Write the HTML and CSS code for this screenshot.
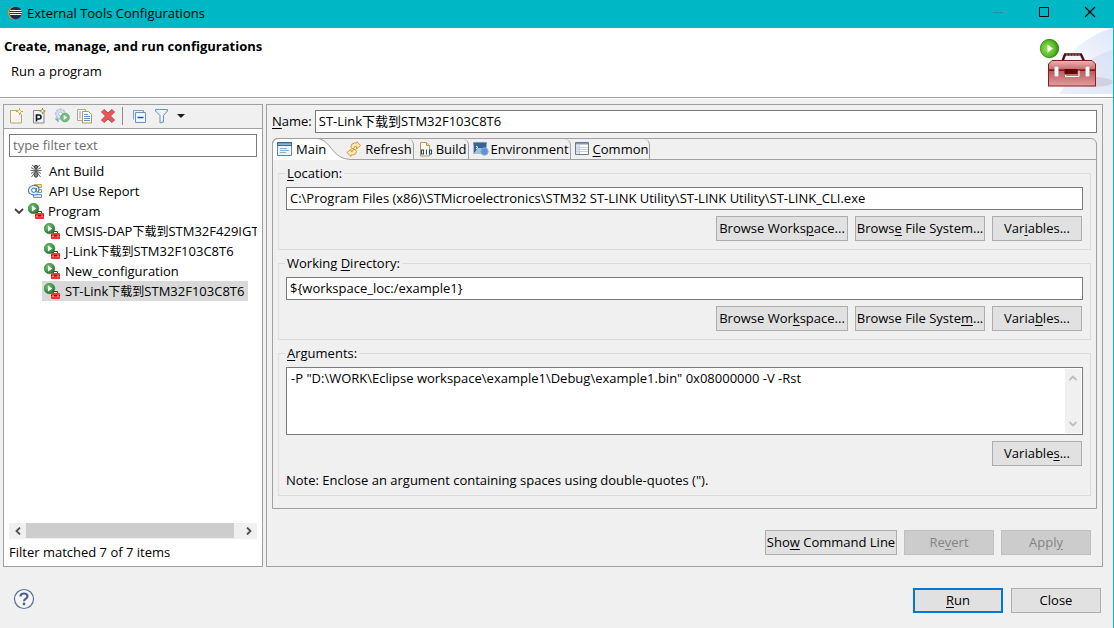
FILE: index.html
```html
<!DOCTYPE html>
<html lang="en">
<head>
<meta charset="utf-8">
<title>External Tools Configurations</title>
<link rel="stylesheet" href="styles.css">
</head>
<body>
<svg class="defs" width="0" height="0" aria-hidden="true">
  <defs>
    <radialGradient id="ball" cx="0.4" cy="0.35" r="0.7"><stop offset="0" stop-color="#7cc878"/><stop offset="0.6" stop-color="#3c9a45"/><stop offset="1" stop-color="#1c6b30"/></radialGradient>
    <linearGradient id="gold" x1="0" y1="0" x2="1" y2="1"><stop offset="0" stop-color="#fffbe6"/><stop offset="1" stop-color="#eef0fa"/></linearGradient>
    <linearGradient id="blue" x1="0" y1="0" x2="0" y2="1"><stop offset="0" stop-color="#4f86bf"/><stop offset="1" stop-color="#9cd3ea"/></linearGradient>
    <linearGradient id="lid" x1="0" y1="0" x2="0" y2="1"><stop offset="0" stop-color="#efb4b4"/><stop offset="1" stop-color="#c4686a"/></linearGradient>
    <linearGradient id="box" x1="0" y1="0" x2="0" y2="1"><stop offset="0" stop-color="#bd5558"/><stop offset="0.5" stop-color="#cf787a"/><stop offset="1" stop-color="#e0a0a0"/></linearGradient>
    <radialGradient id="bigball" cx="0.4" cy="0.5" r="0.6"><stop offset="0" stop-color="#9be04a"/><stop offset="0.65" stop-color="#5cbf2a"/><stop offset="1" stop-color="#2d8a14"/></radialGradient>
    <linearGradient id="fade" x1="0" y1="1" x2="1" y2="0"><stop offset="0.15" stop-color="#ffffff"/><stop offset="1" stop-color="#dfe7f8"/></linearGradient>
    <symbol id="run-tool" viewBox="0 0 16 16">
      <circle cx="5.500" cy="5.500" r="5.300" fill="url(#ball)" stroke="#2b7a3c" stroke-width="0.600"/>
      <path d="M4 2.500v6l4.200-3z" fill="#fff"/>
      <path d="M9.500 10v-1.500h4v1.500" fill="none" stroke="#b81414"/>
      <rect x="7" y="10" width="9" height="6" rx="0.800" fill="#e83a34"/>
      <path d="M7 12.500h9" stroke="#8c1010"/><path d="M9 12v2M14 12v2" stroke="#ffb0a0"/>
    </symbol>
  </defs>
</svg>
<div class="window">
  <div class="titlebar">
    <svg class="icon14" viewBox="0 0 14 14"><circle cx="6.300" cy="7" r="6.300" fill="#f7941e"/><circle cx="7.600" cy="7" r="6.200" fill="#2c2255"/><path d="M2 4.500h11.500M1.500 6.500h12.500M2 8.500h11.500" stroke="#fff"/></svg>
    <span class="caption">External Tools Configurations</span>
    <button class="wbtn" aria-label="Minimize"><svg viewBox="0 0 12 12"><path d="M1 6.500h10" stroke="#16929b"/></svg></button>
    <button class="wbtn" aria-label="Maximize"><svg viewBox="0 0 12 12"><path d="M1.500 1.500h9v9h-9z" fill="none" stroke="#000"/></svg></button>
    <button class="wbtn" aria-label="Close window"><svg viewBox="0 0 12 12"><path d="M1 1l10 10M11 1L1 11" stroke="#000" stroke-width="1.200"/></svg></button>
  </div>

  <header class="header">
    <div>
      <h1>Create, manage, and run configurations</h1>
      <p>Run a program</p>
    </div>
    <svg class="banner" viewBox="0 0 78 66" aria-hidden="true">
      <path d="M78 0C48 8 22 34 5 66H78z" fill="url(#fade)"/>
      <path d="M78 22C58 26 38 44 24 66H78z" fill="#c4d2ee" opacity="0.350"/>
      <ellipse cx="58" cy="54" rx="20" ry="5" fill="#b9a5b8" opacity="0.350"/>
      <path d="M27.500 33l2.500-6.500h16l3 6.500" fill="none" stroke="#4a1015" stroke-width="2.400"/>
      <path d="M31 27h14" stroke="#b98080" stroke-width="1" stroke-dasharray="2 1"/>
      <path d="M13.500 42V36l3.500-3.500h40l3.500 3.500v6z" fill="url(#lid)" stroke="#7c1c22"/>
      <rect x="13.500" y="42" width="47" height="16" fill="url(#box)" stroke="#8a1c22"/>
      <path d="M14 42.500h46" stroke="#7b1920"/>
      <path d="M30.500 47v1.500h13.500v-6" fill="none" stroke="#fff"/><rect x="29.500" y="41" width="13" height="5" fill="#6b0408"/>
      <rect x="19.500" y="38.500" width="4" height="10" rx="1" fill="#f4f4f0" stroke="#b9aaaa" stroke-width="0.600"/>
      <rect x="50.500" y="38.500" width="4" height="10" rx="1" fill="#f4f4f0" stroke="#b9aaaa" stroke-width="0.600"/>
      <circle cx="14.500" cy="20.500" r="9.200" fill="url(#bigball)" stroke="#2c7c18" stroke-width="0.800"/>
      <path d="M12.500 16.500v8l5.500-4z" fill="#fff"/>
    </svg>
  </header>

  <main class="main">
    <section class="pane left">
      <div class="toolbar">
        <button aria-label="New launch configuration"><svg viewBox="0 0 16 16"><path d="M2.500 2.500h7l4 4v8.500h-11z" fill="url(#gold)" stroke="#bfa868"/><path d="M11.500 0v7M8 3.500h7" stroke="#c9a03c"/><path d="M11.500 1.500l2 2-2 2-2-2z" fill="#fff3b0" stroke="#c9a03c" stroke-width="0.600"/></svg></button>
        <button aria-label="New prototype"><svg viewBox="0 0 16 16"><path d="M2.500 2.500h10.500v12.500h-10.500z" fill="#eef3fb" stroke="#8c8a80"/><path d="M5.500 13.500v-6.500h2.500q2 0 2 2t-2 2h-2.500" fill="none" stroke="#10161f" stroke-width="1.600"/><path d="M11.500 0v6M8.500 3h6" stroke="#a0792a"/><path d="M11.500 1l2 2-2 2-2-2z" fill="#fff3b0" stroke="#a0792a" stroke-width="0.700"/></svg></button>
        <button aria-label="Export"><svg viewBox="0 0 16 16"><circle cx="6.500" cy="6" r="4.800" fill="#dde4ef" stroke="#b3bed2" stroke-width="1.500" stroke-dasharray="2.500 1"/><circle cx="6.500" cy="6" r="2" fill="#f8f9fc" stroke="#b7c2d6"/><circle cx="11" cy="9.500" r="4.300" fill="#73bd83" stroke="#5fae72"/><path d="M9.700 7v5l3.500-2.500z" fill="#fff"/><path d="M0.500 10.500h4v4z" fill="#7f9cc8"/></svg></button>
        <button aria-label="Duplicate"><svg viewBox="0 0 16 16"><path d="M0.500 1.500h8v11h-8z" fill="#f3f5fb" stroke="#b8a878"/><path d="M2 4h2M2 6h2M2 8h2M2 10h2" stroke="#8aabd4"/><path d="M5.500 3.500h6l3 3v8.500h-9z" fill="#fdfbf0" stroke="#b19a60"/><path d="M7 6.500h4M7 8.500h6M7 10.500h6M7 12.500h6" stroke="#6a92c6"/></svg></button>
        <button aria-label="Delete"><svg viewBox="0 0 16 16"><path d="M1.500 4l2.500-2.500L8 5l4-3.500L14.500 4l-4 4 4 4-2.500 2.500L8 11l-4 3.500L1.500 12l4-4z" fill="#e4575a" stroke="#c8434a"/></svg></button>
        <span class="sep"></span>
        <button aria-label="Collapse all"><svg viewBox="0 0 16 16"><path d="M2.500 11.500v-9h10v2" fill="#e7eff9" stroke="#7da0c4"/><path d="M4.500 4.500h10v10h-10z" fill="#eef6fd" stroke="#6d93bd"/><path d="M6.500 9.500h6" stroke="#1e508c" stroke-width="1.400"/></svg></button>
        <button aria-label="Filter"><svg viewBox="0 0 16 16"><path d="M1.500 1.500h12v1.500l-4 4.500v6.500l-3.500 1v-7.500l-4.500-4.500z" fill="#dcebf7" stroke="#6f93b7"/><path d="M4 3h6L7.500 6v7" fill="none" stroke="#fff" stroke-width="1.200"/></svg></button>
        <button class="drop" aria-label="Filter menu"><svg viewBox="0 0 8 4"><path d="M0 0h8L4 4z" fill="#1c1c1c"/></svg></button>
      </div>
      <div class="leftbody">
        <input class="field" type="text" placeholder="type filter text" aria-label="Filter">
        <ul class="tree">
          <li><span class="row"><svg class="ic" viewBox="0 0 16 16"><path d="M4 2l2.500 2M12 2L9.500 4M2.500 7.500h11M3.500 14l3-4M12.500 14l-3-4M3 4.500l3.500 2M13 4.500l-3.500 2M3 10.500l3.500-2M13 10.500l-3.500-2" stroke="#6a6a6a" fill="none"/><circle cx="8" cy="4" r="1.700" fill="#777" stroke="#444"/><ellipse cx="8" cy="7.500" rx="1.500" ry="1.500" fill="#555"/><ellipse cx="8" cy="11.500" rx="1.800" ry="2.800" fill="#8a8a8a" stroke="#444"/></svg><span>Ant Build</span></span></li>
          <li><span class="row"><svg class="ic" viewBox="0 0 16 16"><path d="M6.500 1.500h7v3h-7z" fill="#f4df8c" stroke="#c2a850"/><path d="M9.500 6.500h4v3h-4z" fill="#f6f2c8" stroke="#85a673"/><path d="M5.500 11.500h8v3h-8z" fill="#dbe8f7" stroke="#6b93c4"/><path d="M10 11Q7.500 12.500 4.500 11.700 0 10.500 0.500 7T5 2.500Q10.800 2 11 6q0 3.200-2.200 3-1-.1-.7-1.500l.6-2.500" fill="#eef5fc" stroke="#4a7fb8" stroke-width="1.200"/><circle cx="5.800" cy="7.200" r="2.200" fill="#fff" stroke="#356da8"/></svg><span>API Use Report</span></span></li>
          <li>
            <span class="row open"><svg class="chev" viewBox="0 0 10 6"><path d="M1 1l4 4 4-4" fill="none" stroke="#404040" stroke-width="1.800"/></svg><svg class="ic"><use href="#run-tool"/></svg><span>Program</span></span>
            <ul>
              <li><span class="row"><svg class="ic"><use href="#run-tool"/></svg><span>CMSIS-DAP<span lang="zh">下载到</span>STM32F429IGT6</span></span></li>
              <li><span class="row"><svg class="ic"><use href="#run-tool"/></svg><span>J-Link<span lang="zh">下载到</span>STM32F103C8T6</span></span></li>
              <li><span class="row"><svg class="ic"><use href="#run-tool"/></svg><span>New_configuration</span></span></li>
              <li><span class="row selected"><svg class="ic"><use href="#run-tool"/></svg><span>ST-Link<span lang="zh">下载到</span>STM32F103C8T6</span></span></li>
            </ul>
          </li>
        </ul>
        <div class="hscroll">
          <button aria-label="Scroll left"><svg viewBox="0 0 8 8"><path d="M6 0.500L2.500 4 6 7.500" fill="none" stroke="#505050" stroke-width="1.800"/></svg></button>
          <span class="track"><span class="thumb"></span></span>
          <button aria-label="Scroll right"><svg viewBox="0 0 8 8"><path d="M2 0.500L5.500 4 2 7.500" fill="none" stroke="#505050" stroke-width="1.800"/></svg></button>
        </div>
        <p class="status">Filter matched 7 of 7 items</p>
      </div>
    </section>

    <section class="pane right">
      <div class="namerow"><label for="name"><u>N</u>ame:</label><input id="name" class="field" type="text" value="ST-Link下载到STM32F103C8T6"></div>
      <div class="folder">
        <div class="tabs" role="tablist">
          <button class="tab active" role="tab" aria-selected="true">
            <svg class="curve" viewBox="0 0 80 22" aria-hidden="true"><path d="M0 22V6L6 0.500H44C60 0.500 58 21.500 80 21.500V22z" fill="#fff"/><path d="M0.500 22V6Q0.500 0.500 6 0.500H44C60 0.500 58 21.500 80 21.500" fill="none" stroke="#a0a0a0"/></svg>
            <svg class="ic" viewBox="0 0 16 16"><path d="M0.500 1.500h14v13h-14z" fill="#eef6fc" stroke="#5f8796"/><path d="M0.500 1.500h14v3h-14z" fill="url(#blue)" stroke="#316c94"/><path d="M3 7.500h7M3 9.500h9M3 11.500h6" stroke="#88a9d8"/></svg><span>Main</span></button>
          <button class="tab refresh" role="tab"><svg class="ic" viewBox="0 0 16 16"><path d="M5.500 7.500l-.5-2q0-3 3.500-3.500l2.500 0V.8l3.500 3.700-4 3.500V5.500q-2.500-.5-2.500 2z" fill="#ffe9ae" stroke="#d09a3c"/><path d="M9.500 8.500l1 2q0 3-3.500 3.500L5 14v1.500L.8 11.500 5 8.300v2.200q2.500.3 2-2z" fill="#ffe9ae" stroke="#d09a3c"/></svg><span>Refresh</span></button>
          <button class="tab" role="tab"><svg class="ic" viewBox="0 0 16 16"><path d="M2.500 1.500h6l3 3v10.500h-9z" fill="#fffdf2" stroke="#b99a4c"/><path d="M8.500 1.500v3h3" fill="#f0dc9c" stroke="#b99a4c"/><path d="M3.500 9h2v4h-2zM8.500 8.500v5M11.500 9h2v4h-2z" fill="#fff" stroke="#234a78" stroke-width="1.100"/></svg><span>Build</span></button>
          <button class="tab" role="tab"><svg class="ic" viewBox="0 0 16 16"><path d="M0.500 1.500h13v11h-13z" fill="#3b6192" stroke="#a6bdd6"/><path d="M0.500 1.500h13v2h-13z" fill="#2e68a8"/><path d="M1 12l4-5h3l4 5z" fill="#9ebfe0"/><path d="M3 5l2 1.500L3 8" fill="none" stroke="#fff"/><circle cx="11.500" cy="10.500" r="3.700" fill="#5d94d1" stroke="#88b0dc"/></svg><span>Environment</span></button>
          <button class="tab" role="tab"><svg class="ic" viewBox="0 0 16 16"><path d="M0.500 1.500h13v12h-13z" fill="#fff" stroke="#6c7896"/><path d="M1 2h12v1.500H1z" fill="#8798bd"/><path d="M1 4h3.500v9H1z" fill="#dfe6f3"/><path d="M4.500 4v9M1 6.500h12M1 8.500h12M1 10.500h12" stroke="#c6cede"/></svg><span><u>C</u>ommon</span></button>
        </div>
        <div class="page" role="tabpanel">
          <fieldset>
            <legend><label for="loc"><u>L</u>ocation:</label></legend>
            <input id="loc" class="field" type="text" value="C:\Program Files (x86)\STMicroelectronics\STM32 ST-LINK Utility\ST-LINK Utility\ST-LINK_CLI.exe">
            <div class="actions"><button class="btn wide">Browse Works<u>p</u>ace...</button><button class="btn mid">Brows<u>e</u> File System...</button><button class="btn">Var<u>i</u>ables...</button></div>
          </fieldset>
          <fieldset>
            <legend><label for="dir">Working <u>D</u>irectory:</label></legend>
            <input id="dir" class="field" type="text" value="${workspace_loc:/example1}">
            <div class="actions"><button class="btn wide">Browse Wor<u>k</u>space...</button><button class="btn mid">Browse File Syste<u>m</u>...</button><button class="btn">Varia<u>b</u>les...</button></div>
          </fieldset>
          <fieldset>
            <legend><label for="args"><u>A</u>rguments:</label></legend>
            <div class="area">
              <textarea id="args" rows="3">-P "D:\WORK\Eclipse workspace\example1\Debug\example1.bin" 0x08000000 -V -Rst</textarea>
              <span class="vscroll"><svg viewBox="0 0 8 8"><path d="M0.500 6L4 2.500 7.500 6" fill="none" stroke="#bdbdbd" stroke-width="1.800"/></svg><svg viewBox="0 0 8 8"><path d="M0.500 2L4 5.500 7.500 2" fill="none" stroke="#bdbdbd" stroke-width="1.800"/></svg></span>
            </div>
            <div class="actions"><button class="btn">Variable<u>s</u>...</button></div>
            <p class="note">Note: Enclose an argument containing spaces using double-quotes (").</p>
          </fieldset>
        </div>
      </div>
      <div class="actions apply"><button class="btn wide">Sho<u>w</u> Command Line</button><button class="btn" disabled>Re<u>v</u>ert</button><button class="btn" disabled>Appl<u>y</u></button></div>
    </section>
  </main>

  <footer class="footer">
    <button class="help" aria-label="Help"><svg viewBox="0 0 22 22"><circle cx="11" cy="11" r="9.500" fill="#f6f7fa" stroke="#5d6f94" stroke-width="1.200"/><path d="M7.500 8.500q0-3 3.500-3t3.500 2.800q0 1.700-2 2.700-1.400.7-1.400 2.300" fill="none" stroke="#51648c" stroke-width="2.200"/><circle cx="11" cy="16" r="1.400" fill="#51648c"/></svg></button>
    <button class="btn primary"><u>R</u>un</button>
    <button class="btn">Close</button>
  </footer>
</div>
</body>
</html>
```
FILE: styles.css
```css
* { box-sizing: border-box; }

body {
  margin: 0;
  background: #f0f0f0;
  color: #000;
  font: 13px/20px "Open Sans", "Noto Sans CJK SC", sans-serif;
}

h1, p, ul { margin: 0; padding: 0; }
ul { list-style: none; }
button, input, textarea { font: inherit; color: inherit; }
button { padding: 0; border: 0; background: none; }
svg { display: block; flex: none; }
u { text-underline-offset: 2px; }
.defs { position: absolute; }

.window {
  display: flex;
  flex-direction: column;
  min-height: 100vh;
  border-right: 1px solid #00b7c3;
}

.titlebar {
  display: flex;
  align-items: center;
  height: 28px;
  padding: 0 0 2px 8px;
  background: #00b7c6;
}
.icon14 { width: 14px; height: 14px; }
.caption { flex: 1; padding-left: 5px; }
.wbtn {
  display: flex;
  align-items: center;
  justify-content: center;
  width: 46px;
  height: 26px;
  padding-bottom: 2px;
}
.wbtn svg { width: 12px; height: 12px; }

.header {
  display: flex;
  justify-content: space-between;
  height: 70px;
  padding-left: 4px;
  border-bottom: 1px solid #a0a0a0;
  background: #fff;
}
.header h1 { padding-top: 8px; font-size: 13px; line-height: 20px; }
.header p { padding: 5px 0 0 7px; }
.banner { width: 78px; height: 66px; }

.main {
  display: flex;
  flex: 1;
  gap: 3px;
  padding: 5px 10px 0 3px;
  border-top: 1px solid #fff;
}
.pane { border: 1px solid #a0a0a0; }
.left {
  display: flex;
  flex-direction: column;
  flex: none;
  width: 260px;
  background: #fff;
}
.toolbar {
  display: flex;
  align-items: center;
  gap: 7px;
  height: 24px;
  padding: 0 0 1px 4px;
  border-bottom: 1px solid #a0a0a0;
  background: #f0f0f0;
}
.toolbar svg { width: 16px; height: 16px; }
.toolbar .sep { width: 1px; height: 18px; margin: 0 1px 0 -1px; background: #8c8c8c; }
.toolbar .drop svg { width: 8px; height: 4px; }

.leftbody {
  display: flex;
  flex-direction: column;
  flex: 1;
  padding: 5px 5px 4px;
}
.field {
  display: block;
  width: 100%;
  min-width: 0;
  height: 23px;
  padding: 0 3px 2px;
  border: 1px solid #7a7a7a;
  border-radius: 0;
  background: #fff;
}
.field::placeholder { color: #6d6d6d; opacity: 1; }
.tree { flex: 1; padding-top: 4px; overflow: hidden; }
.tree [lang="zh"] { font-size: 12px; }
.row {
  display: flex;
  align-items: center;
  width: fit-content;
  height: 20px;
  gap: 5px;
  padding: 0 4px 0 2px;
  margin-left: 17px;
  white-space: nowrap;
}
.tree li ul .row { margin-left: 33px; }
.tree .row.open { margin-left: 5px; padding-left: 0; gap: 4px; }
.row.selected { background: #d9d9d9; }
.ic { width: 16px; height: 16px; }
.chev { width: 10px; height: 6px; }

.hscroll { display: flex; height: 16px; background: #f0f0f0; }
.hscroll button { display: flex; align-items: center; justify-content: center; width: 17px; }
.hscroll svg { width: 8px; height: 8px; }
.track { flex: 1; padding-right: 6px; }
.thumb { display: block; height: 15px; background: #cdcdcd; }
.status { padding-top: 3px; }

.right {
  display: flex;
  flex-direction: column;
  flex: 1;
  min-width: 0;
  padding: 5px;
}
.namerow { display: flex; align-items: center; gap: 3px; }
.namerow label { flex: none; padding-bottom: 2px; }

.folder {
  margin-top: 5px;
  border: 1px solid #a0a0a0;
  border-radius: 6px 6px 0 0;
}
.tabs {
  display: flex;
  height: 21px;
  border-bottom: 1px solid #a0a0a0;
}
.tab {
  display: flex;
  align-items: center;
  gap: 2px;
  padding: 0 1px 0 4px;
  border-right: 1px solid #a0a0a0;
  border-top-right-radius: 6px;
  white-space: nowrap;
}
.tab.active { position: relative; padding: 0 20px 0 4px; gap: 3px; border: 0; }
.tab.active > * { position: relative; }
.tab.active .curve { position: absolute; left: -1px; top: -1px; width: 80px; height: 22px; }
.tab.refresh { padding-left: 0; gap: 3px; position: relative; }

.page { display: flex; flex-direction: column; gap: 3px; padding: 3px 5px 12px; }
fieldset {
  min-width: 0;
  margin: 0;
  padding: 4px 7px 8px;
  border: 1px solid #dcdcdc;
}
legend { padding: 0 2px; margin-left: -1px; }
.actions { display: flex; justify-content: flex-end; gap: 7px; padding: 6px 1px 0 0; }
.btn {
  width: 90px;
  height: 25px;
  padding-bottom: 2px;
  border: 1px solid #adadad;
  background: #e1e1e1;
  white-space: nowrap;
}
.btn.wide { width: 132px; }
.btn.mid { width: 130px; }
.btn:disabled { border-color: #bfbfbf; background: #ccc; color: #838383; }
.btn.primary { border: 2px solid #0078d7; }

.area {
  display: flex;
  height: 68px;
  padding: 1px;
  border: 1px solid #7a7a7a;
  background: #fff;
}
.area textarea {
  flex: 1;
  min-width: 0;
  padding: 0 3px;
  border: 0;
  outline: 0;
  resize: none;
  overflow: hidden;
  background: transparent;
  line-height: 18px;
}
.vscroll {
  display: flex;
  flex-direction: column;
  align-items: center;
  justify-content: space-between;
  width: 16px;
  padding: 5px 0;
  background: #f0f0f0;
}
.vscroll svg { width: 8px; height: 8px; }
.note { padding-top: 4px; margin-bottom: -3px; }
.apply { margin-top: auto; padding: 0 6px 6px 0; }

.footer {
  display: flex;
  align-items: center;
  gap: 8px;
  height: 61px;
  padding: 6px 12px 0 13px;
}
.help { margin-right: auto; padding-bottom: 3px; }
.help svg { width: 22px; height: 22px; }
```
